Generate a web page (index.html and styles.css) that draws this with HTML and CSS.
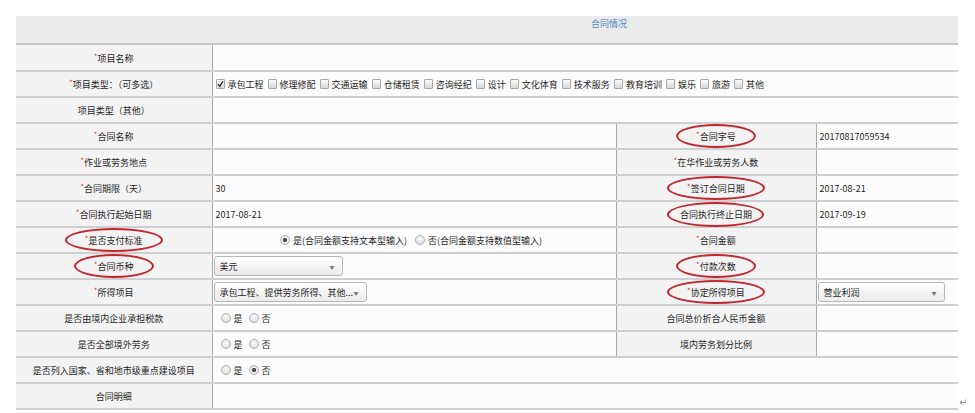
FILE: index.html
```html
<!DOCTYPE html>
<html>
<head>
    <meta charset="UTF-8">
    <title>合同情况</title>
    <link rel="stylesheet" href="styles.css">
</head>
<body>

<div class="page">
    <div class="sheet">
        <div class="sheet-title">合同情况</div>

        <table class="form">
            <colgroup>
                <col class="c-label">
                <col class="c-value">
                <col class="c-label2">
                <col class="c-value2">
            </colgroup>
            <tr>
                <th><i class="req">*</i>项目名称</th>
                <td colspan="3"></td>
            </tr>
            <tr>
                <th><i class="req">*</i>项目类型：（可多选）</th>
                <td colspan="3" class="checks">
                    <span class="check-item"><span class="cb on"><svg width="7" height="8" viewBox="0 0 7 8"><path d="M1 4.2 L2.8 6.3 L6 1" fill="none" stroke="#222" stroke-width="1.3"/></svg></span>承包工程</span>
                    <span class="check-item"><span class="cb"></span>修理修配</span>
                    <span class="check-item"><span class="cb"></span>交通运输</span>
                    <span class="check-item"><span class="cb"></span>仓储租赁</span>
                    <span class="check-item"><span class="cb"></span>咨询经纪</span>
                    <span class="check-item"><span class="cb"></span>设计</span>
                    <span class="check-item"><span class="cb"></span>文化体育</span>
                    <span class="check-item"><span class="cb"></span>技术服务</span>
                    <span class="check-item"><span class="cb"></span>教育培训</span>
                    <span class="check-item"><span class="cb"></span>娱乐</span>
                    <span class="check-item"><span class="cb"></span>旅游</span>
                    <span class="check-item"><span class="cb"></span>其他</span>
                </td>
            </tr>
            <tr>
                <th>项目类型（其他）</th>
                <td colspan="3"></td>
            </tr>
            <tr>
                <th><i class="req">*</i>合同名称</th>
                <td></td>
                <th><span class="ring"><i class="req">*</i>合同字号</span></th>
                <td>20170817059534</td>
            </tr>
            <tr>
                <th><i class="req">*</i>作业或劳务地点</th>
                <td></td>
                <th><i class="req">*</i>在华作业或劳务人数</th>
                <td></td>
            </tr>
            <tr>
                <th><i class="req">*</i>合同期限（天）</th>
                <td>30</td>
                <th><span class="ring"><i class="req">*</i>签订合同日期</span></th>
                <td>2017-08-21</td>
            </tr>
            <tr>
                <th><i class="req">*</i>合同执行起始日期</th>
                <td>2017-08-21</td>
                <th><span class="ring ring-tight">合同执行终止日期</span></th>
                <td>2017-09-19</td>
            </tr>
            <tr>
                <th><span class="ring"><i class="req">*</i>是否支付标准</span></th>
                <td class="center">
                    <span class="radio-item"><span class="rd on"></span>是(合同金额支持文本型输入)</span>
                    <span class="radio-item"><span class="rd"></span>否(合同金额支持数值型输入)</span>
                </td>
                <th><i class="req">*</i>合同金额</th>
                <td></td>
            </tr>
            <tr>
                <th><span class="ring"><i class="req">*</i>合同币种</span></th>
                <td class="pick">
                    <div class="sel sel-currency"><span>美元</span><span class="sel-arrow">▼</span></div>
                </td>
                <th><span class="ring"><i class="req">*</i>付款次数</span></th>
                <td></td>
            </tr>
            <tr>
                <th><i class="req">*</i>所得项目</th>
                <td class="pick">
                    <div class="sel sel-income"><span>承包工程、提供劳务所得、其他...</span><span class="sel-arrow">▼</span></div>
                </td>
                <th><span class="ring"><i class="req">*</i>协定所得项目</span></th>
                <td class="pick">
                    <div class="sel sel-treaty"><span>营业利润</span><span class="sel-arrow">▼</span></div>
                </td>
            </tr>
            <tr>
                <th>是否由境内企业承担税款</th>
                <td class="yn">
                    <span class="radio-item"><span class="rd"></span>是</span>
                    <span class="radio-item"><span class="rd"></span>否</span>
                </td>
                <th>合同总价折合人民币金额</th>
                <td></td>
            </tr>
            <tr>
                <th>是否全部境外劳务</th>
                <td class="yn">
                    <span class="radio-item"><span class="rd"></span>是</span>
                    <span class="radio-item"><span class="rd"></span>否</span>
                </td>
                <th>境内劳务划分比例</th>
                <td></td>
            </tr>
            <tr>
                <th>是否列入国家、省和地市级重点建设项目</th>
                <td colspan="3" class="yn">
                    <span class="radio-item"><span class="rd"></span>是</span>
                    <span class="radio-item"><span class="rd on"></span>否</span>
                </td>
            </tr>
            <tr>
                <th>合同明细</th>
                <td colspan="3"></td>
            </tr>
        </table>
    </div>

    <span class="para-mark">↵</span>
</div>

</body>
</html>
```

FILE: styles.css
```css
body {
    margin: 0;
    font-family: "Noto Sans CJK SC", "Microsoft YaHei", sans-serif;
    font-size: 9px;
    color: #1e1e1e;
    background: #fff;
}

.page {
    display: flex;
    align-items: flex-end;
    padding: 16px 0 0 16px;
}

.sheet {
    width: 942px;
}

.sheet-title {
    height: 29px;
    box-sizing: border-box;
    background: #ebebeb;
    border-bottom: 2px solid #c6c6c6;
    color: #4a82c4;
    text-align: center;
    padding: 1px 0 0 244px;
    line-height: 13px;
}

.form {
    width: 942px;
    border-collapse: collapse;
    table-layout: fixed;
}

.c-label { width: 196px; }
.c-value { width: 404px; }
.c-label2 { width: 200px; }
.c-value2 { width: 142px; }

.form tr {
    height: 26px;
}

.form th,
.form td {
    padding: 0 3px;
    border-bottom: 2px solid #cfcfcf;
    border-right: 1px solid #a8a8a8;
    white-space: nowrap;
    overflow: visible;
    background: #fcfcfc;
    text-align: left;
    font-weight: normal;
}

.form th {
    background: #f3f3f3;
    text-align: center;
}

.form tr > :last-child {
    border-right: none;
}

.req {
    font-style: normal;
    color: #d6403a;
    font-size: 8px;
    vertical-align: 2px;
}

/* red marker rings */
.ring {
    position: relative;
    display: inline-block;
}

.ring::after {
    content: "";
    position: absolute;
    left: -20px;
    right: -20px;
    top: -5px;
    bottom: -5px;
    border: 2px solid #c0262c;
    border-radius: 50%;
}

.ring-tight::after {
    left: -13px;
    right: -12px;
    top: -6px;
    bottom: -6px;
}

/* checkboxes */
.checks {
    padding-left: 4px;
}

.check-item {
    margin-right: 2px;
}

.cb {
    display: inline-block;
    width: 7px;
    height: 8px;
    border: 1px solid #a9a9a9;
    border-radius: 1px;
    background: linear-gradient(#fbfbfb, #d8d8d8);
    vertical-align: -1px;
    margin-right: 3px;
}

.cb svg {
    display: block;
}

/* radios */
.center {
    text-align: center !important;
}

.radio-item {
    margin-right: 6px;
}

.yn {
    padding-left: 8px !important;
}

.yn .radio-item {
    margin-right: 4px;
}

.rd {
    display: inline-block;
    width: 8px;
    height: 8px;
    border: 1px solid #b3b3b3;
    border-radius: 50%;
    background: radial-gradient(circle at 50% 35%, #fdfdfd, #d4d4d4);
    vertical-align: -1px;
    margin-right: 3px;
}

.rd.on {
    background: radial-gradient(circle, #4a4a4a 0 1.8px, #f2f2f2 2.4px, #d4d4d4);
}

/* selects */
.pick {
    padding-left: 1px !important;
}

.sel {
    display: flex;
    align-items: center;
    justify-content: space-between;
    height: 20px;
    box-sizing: border-box;
    border: 1px solid #b6b6b6;
    border-radius: 3px;
    background: linear-gradient(#ffffff, #ebebeb);
    padding: 0 7px 0 5px;
}

.sel-arrow {
    font-size: 5px;
    color: #777;
}

.sel-currency { width: 129px; }
.sel-income { width: 153px; }
.sel-treaty { width: 127px; }

.para-mark {
    font-family: "DejaVu Sans", sans-serif;
    font-size: 10px;
    color: #8a8a8a;
    margin: 0 0 2px 1px;
}
```
